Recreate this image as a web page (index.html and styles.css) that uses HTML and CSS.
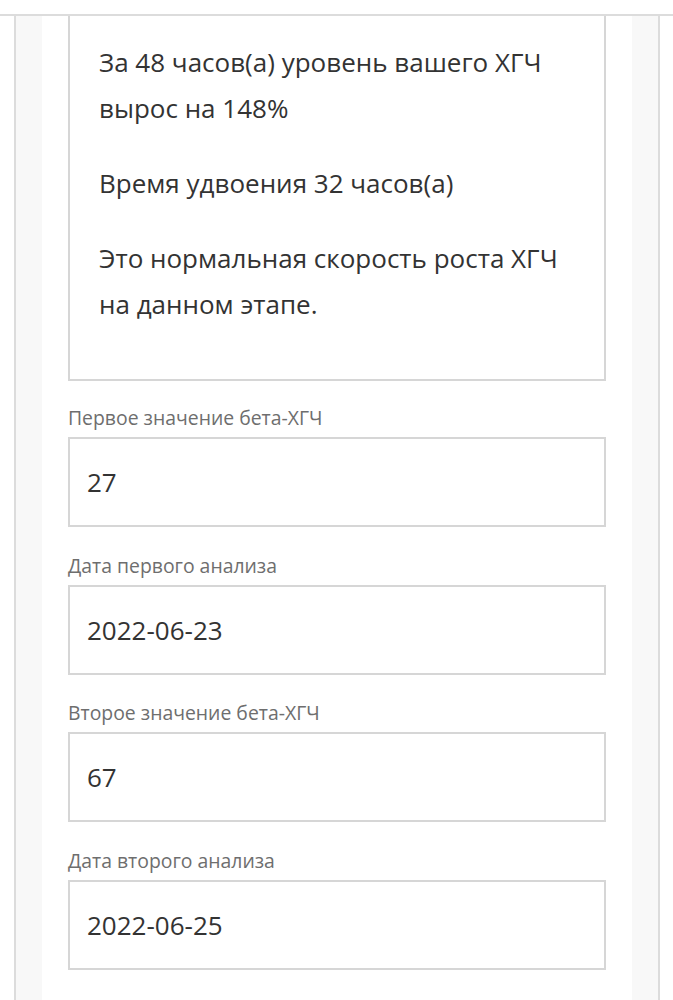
FILE: index.html
```html
<!DOCTYPE html>
<html lang="ru">
<head>
  <meta charset="UTF-8" />
  <meta name="viewport" content="width=device-width, initial-scale=1.0"/>
  <title>Калькулятор ХГЧ</title>
  <link rel="stylesheet" href="styles.css">
</head>
<body>
  <div class="topbar"></div>
  <div class="frame">
    <div class="calc-card">
      <div class="result">
        <p>За 48 часов(а) уровень вашего ХГЧ вырос на 148%</p>
        <p>Время удвоения 32 часов(а)</p>
        <p>Это нормальная скорость роста ХГЧ на данном этапе.</p>
      </div>

      <div class="field">
        <label for="firstValue">Первое значение бета-ХГЧ</label>
        <input type="text" id="firstValue" value="27" />
      </div>
      <div class="field">
        <label for="firstDate">Дата первого анализа</label>
        <input type="text" id="firstDate" value="2022-06-23" />
      </div>
      <div class="field">
        <label for="secondValue">Второе значение бета-ХГЧ</label>
        <input type="text" id="secondValue" value="67" />
      </div>
      <div class="field">
        <label for="secondDate">Дата второго анализа</label>
        <input type="text" id="secondDate" value="2022-06-25" />
      </div>
    </div>
  </div>
</body>
</html>
```

FILE: styles.css
```css
* {
  box-sizing: border-box;
  font-family: "Open Sans", "Noto Sans", sans-serif;
  margin: 0;
  padding: 0;
}

body {
  background-color: #fff;
  height: 1000px;
  overflow: hidden;
}

.topbar {
  height: 16px;
  border-bottom: 2px solid #dcdcdc;
  background-color: #fff;
}

.frame {
  margin: 0 13px 0 14px;
  border-left: 2px solid #dcdcdc;
  border-right: 2px solid #dcdcdc;
  background-color: #f8f8f8;
  padding: 0 26px;
  min-height: 984px;
}

.calc-card {
  background-color: #fff;
  padding: 0 26px 40px;
  min-height: 984px;
}

.result {
  border: 2px solid #d6d6d6;
  border-top: none;
  padding: 23px 30px 23px 29px;
}

.result p {
  font-size: 26px;
  line-height: 46px;
  color: #333;
  margin-bottom: 29px;
}

.field {
  margin-top: 24px;
}

.field + .field {
  margin-top: 25.5px;
}

.field label {
  display: block;
  font-size: 19.4px;
  line-height: 26px;
  color: #6e6e6e;
  margin-bottom: 6px;
}

.field input {
  display: block;
  width: 100%;
  height: 90px;
  border: 2px solid #d6d6d6;
  border-radius: 0;
  padding: 0 17px;
  font-size: 26px;
  color: #333;
  background-color: #fff;
  outline: none;
}
```
